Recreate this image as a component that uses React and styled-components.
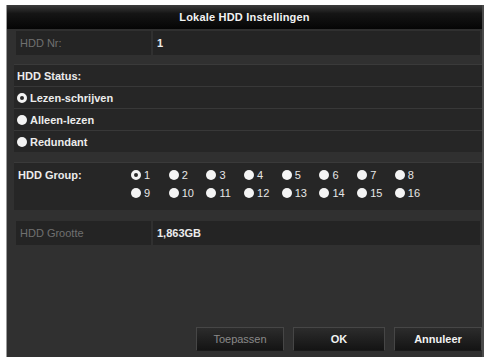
import styled, { createGlobalStyle } from 'styled-components';

const Global = createGlobalStyle`
  html, body {
    margin: 0;
    padding: 0;
    background: #fff;
    overflow: hidden;
  }
  body {
    font-family: "Liberation Sans", Arial, sans-serif;
  }
`;

const Dialog = styled.div`
  margin: 5px 0 0 6px;
  width: 478px;
  height: 352px;
  background: #303030;
  border-left: 1px solid #9a9a9a;
  border-right: 2px solid #4a4a4a;
  box-sizing: border-box;
  display: flex;
  flex-direction: column;
`;

const TitleBar = styled.div`
  height: 24px;
  background: linear-gradient(#3c3c3c 0%, #151515 35%, #050505 100%);
  color: #f2f2f2;
  font-size: 11px;
  font-weight: bold;
  display: flex;
  align-items: center;
  justify-content: center;
  letter-spacing: 0.2px;
`;

const Body = styled.div`
  flex: 1;
  display: flex;
  flex-direction: column;
  padding: 2px 0 0 7px;
`;

const FieldRow = styled.div`
  display: grid;
  grid-template-columns: 135px 1fr;
  gap: 2px;
  height: 24px;
  margin: ${p => p.$top || 0}px 2px 0 2px;
`;

const Cell = styled.div`
  background: #242424;
  color: ${p => (p.$dim ? '#707070' : '#ececec')};
  font-size: 11px;
  font-weight: ${p => (p.$dim ? 'normal' : 'bold')};
  display: flex;
  align-items: center;
  padding-left: 4px;
`;

const Panel = styled.div`
  margin-top: ${p => p.$top}px;
  background: #262626;
  border-top: 1px solid #3a3a3a;
  display: flex;
  flex-direction: column;
`;

const PanelRow = styled.div`
  height: 21px;
  display: flex;
  align-items: center;
  gap: 3px;
  padding-left: 3px;
  color: #ececec;
  font-size: 11px;
  font-weight: bold;
  border-bottom: 1px solid #383838;
  &:last-child {
    border-bottom: none;
  }
`;

const Radio = styled.span`
  width: 10px;
  height: 10px;
  border-radius: 50%;
  box-sizing: border-box;
  flex: none;
  border: ${p => (p.$on ? '3px solid #f4f4f4' : 'none')};
  background: ${p => (p.$on ? '#2a2a2a' : '#f4f4f4')};
`;

const GroupPanel = styled.div`
  margin-top: 10px;
  background: #262626;
  border-top: 1px solid #3a3a3a;
  height: 48px;
  display: flex;
  align-items: flex-start;
  padding: 6px 0 0 4px;
  box-sizing: border-box;
`;

const GroupLabel = styled.div`
  width: 113px;
  color: #ececec;
  font-size: 11px;
  font-weight: bold;
  line-height: 12px;
`;

const GroupGrid = styled.div`
  display: grid;
  grid-template-columns: repeat(8, 37.7px);
  grid-auto-rows: 12px;
  row-gap: 6px;
`;

const GroupItem = styled.div`
  display: flex;
  align-items: center;
  gap: 3px;
  line-height: 12px;
  color: #e6e6e6;
  font-size: 11px;
`;

const Footer = styled.div`
  margin-top: auto;
  display: flex;
  justify-content: flex-end;
  gap: 9px;
  padding: 0 0 6px 0;
`;

const Button = styled.div`
  width: ${p => p.$w}px;
  height: 22px;
  background: linear-gradient(#2c2c2c, #141414);
  border: 1px solid #464646;
  border-bottom-color: #1a1a1a;
  color: ${p => (p.$disabled ? '#8a8a8a' : '#f2f2f2')};
  font-size: 11px;
  font-weight: ${p => (p.$disabled ? 'normal' : 'bold')};
  display: flex;
  align-items: center;
  justify-content: center;
`;

const groups = Array.from({ length: 16 }, (_, i) => i + 1);

export default function App() {
  return (
    <>
      <Global />
      <Dialog>
        <TitleBar>Lokale HDD Instellingen</TitleBar>
        <Body>
          <FieldRow>
            <Cell $dim>HDD Nr:</Cell>
            <Cell>1</Cell>
          </FieldRow>
          <Panel $top={9}>
            <PanelRow>HDD Status:</PanelRow>
            <PanelRow><Radio $on />Lezen-schrijven</PanelRow>
            <PanelRow><Radio />Alleen-lezen</PanelRow>
            <PanelRow><Radio />Redundant</PanelRow>
          </Panel>
          <GroupPanel>
            <GroupLabel>HDD Group:</GroupLabel>
            <GroupGrid>
              {groups.map(n => (
                <GroupItem key={n}>
                  <Radio $on={n === 1} />
                  {n}
                </GroupItem>
              ))}
            </GroupGrid>
          </GroupPanel>
          <FieldRow $top={11}>
            <Cell $dim>HDD Grootte</Cell>
            <Cell>1,863GB</Cell>
          </FieldRow>
          <Footer>
            <Button $w={86} $disabled>Toepassen</Button>
            <Button $w={90}>OK</Button>
            <Button $w={86}>Annuleer</Button>
          </Footer>
        </Body>
      </Dialog>
    </>
  );
}
